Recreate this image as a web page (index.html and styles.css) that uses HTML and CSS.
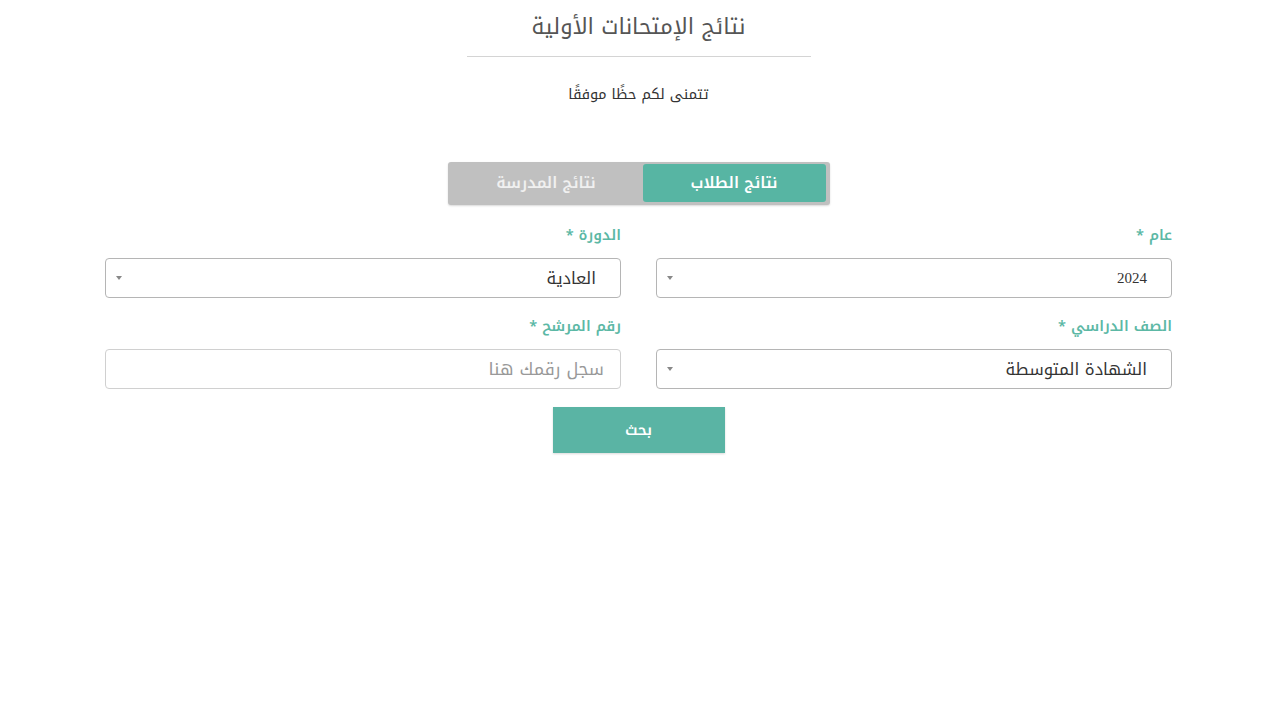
FILE: index.html
```html
<!DOCTYPE html>
<html lang="ar" dir="rtl">
<head>
<meta charset="utf-8">
<title>نتائج الإمتحانات الأولية</title>
<link rel="stylesheet" href="styles.css">
</head>
<body>
<main class="page">
  <header class="head">
    <h1 class="title">نتائج الإمتحانات الأولية</h1>
    <div class="rule"></div>
    <p class="sub">تتمنى لكم حظًا موفقًا</p>
  </header>

  <div class="toggle">
    <button class="tab active">نتائج الطلاب</button>
    <button class="tab">نتائج المدرسة</button>
  </div>

  <form class="form">
    <div class="field">
      <label class="label">عام *</label>
      <div class="select"><span class="val num">2024</span><span class="caret"></span></div>
    </div>
    <div class="field">
      <label class="label">الدورة *</label>
      <div class="select"><span class="val">العادية</span><span class="caret"></span></div>
    </div>
    <div class="field">
      <label class="label">الصف الدراسي *</label>
      <div class="select"><span class="val">الشهادة المتوسطة</span><span class="caret"></span></div>
    </div>
    <div class="field">
      <label class="label">رقم المرشح *</label>
      <div class="input"><span class="ph">سجل رقمك هنا</span></div>
    </div>
  </form>

  <div class="actions">
    <button class="search">بحث</button>
  </div>
</main>
</body>
</html>
```
FILE: styles.css
```css
* { box-sizing: border-box; }
html, body { margin: 0; padding: 0; background: #fff; }
body {
  font-family: "Noto Kufi Arabic", "DejaVu Sans", "Noto Sans Arabic", sans-serif;
  color: #333;
  width: 1280px;
  height: 720px;
  overflow: hidden;
}
.page {
  padding-right: 3px;
  display: flex;
  flex-direction: column;
  align-items: center;
}
.head {
  display: flex;
  flex-direction: column;
  align-items: center;
  padding-top: 12px;
}
.title {
  margin: 0;
  font-size: 22px;
  font-weight: normal;
  color: #555;
  line-height: 30px;
}
.rule {
  width: 344px;
  height: 1px;
  background: #d4d4d4;
  margin-top: 14px;
}
.sub {
  margin: 27px 0 0;
  font-size: 14.5px;
  color: #333;
  line-height: 20px;
}
.toggle {
  margin-top: 58px;
  width: 382px;
  height: 43px;
  background: #c0c0c0;
  border-radius: 3px;
  padding: 2px 4px 3px 2px;
  display: flex;
  box-shadow: 0 1px 2px rgba(0,0,0,0.15);
}
.tab {
  flex: 1;
  border: 0;
  background: transparent;
  font-family: inherit;
  font-size: 15.5px;
  font-weight: 600;
  color: #f0f0f0;
  border-radius: 3px;
  padding: 0;
}
.tab.active {
  flex: 0 0 183px;
  background: #57b5a3;
  color: #fff;
}
.form {
  margin-top: 22px;
  width: 1067px;
  display: grid;
  grid-template-columns: 516px 516px;
  column-gap: 35px;
  row-gap: 20px;
}
.field {
  display: flex;
  flex-direction: column;
}
.label {
  font-size: 14.5px;
  font-weight: 600;
  color: #5cb8a5;
  line-height: 20px;
  height: 20px;
  margin-top: -2px;
  margin-bottom: 13px;
}
.select, .input {
  height: 40px;
  border: 1px solid #b5b5b5;
  border-radius: 4px;
  display: flex;
  align-items: center;
  justify-content: space-between;
  padding: 0 24px 0 10px;
}
.input { border-color: #d0d0d0; padding-right: 16px; }
.val {
  font-size: 16.5px;
  color: #333;
}
.val.num {
  font-family: "Liberation Serif", serif;
  font-size: 15px;
}
.ph {
  font-size: 17.5px;
  color: #999;
}
.caret {
  width: 0;
  height: 0;
  border-left: 3px solid transparent;
  border-right: 3px solid transparent;
  border-top: 4px solid #888;
}
.actions {
  margin-top: 18px;
}
.search {
  width: 172px;
  height: 46px;
  border: 0;
  background: #5ab4a4;
  color: #fff;
  font-family: inherit;
  font-size: 15px;
  font-weight: 600;
  box-shadow: 0 1px 2px rgba(0,0,0,0.15);
}
```
